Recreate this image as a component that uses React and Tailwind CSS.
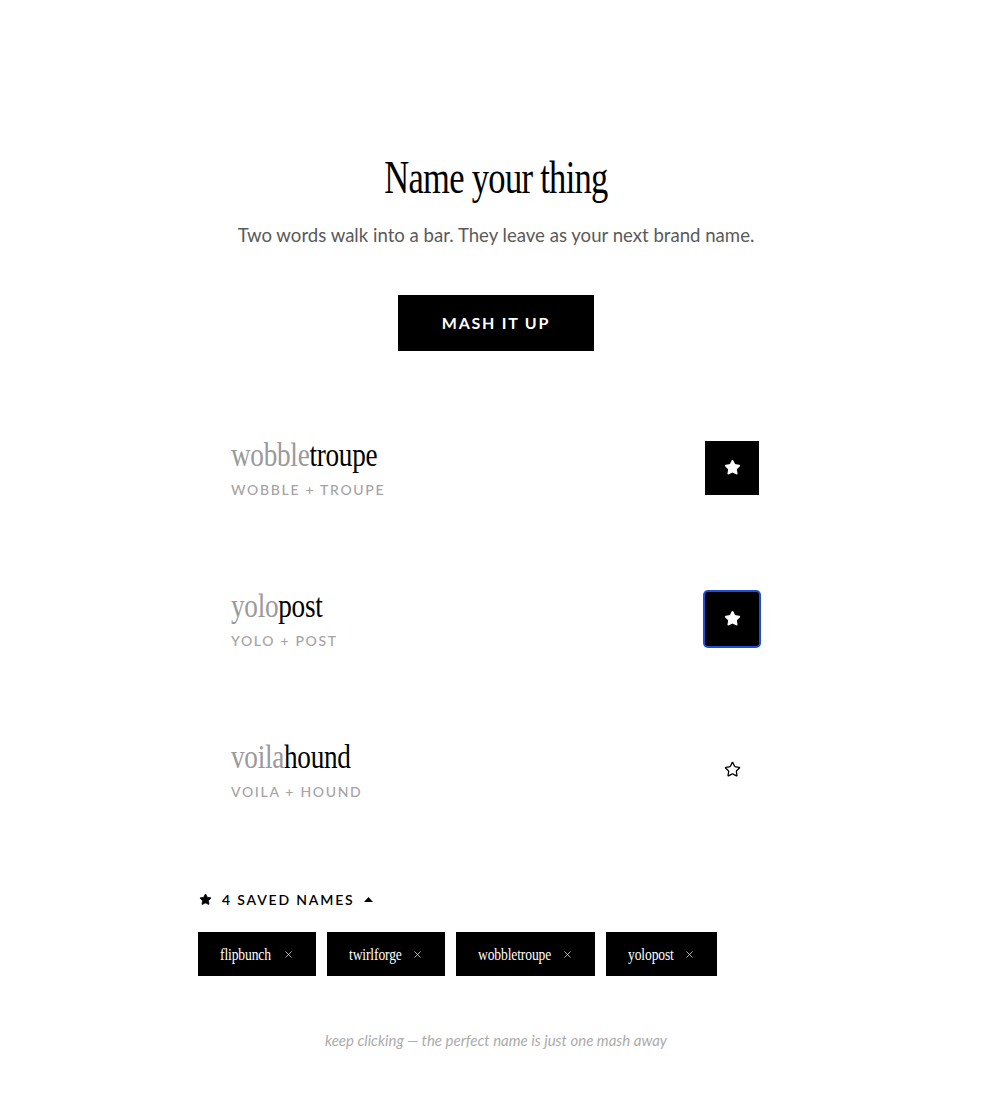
import React, { useState } from 'react';
import { Star, X } from 'lucide-react';

const serif = { fontFamily: '"Liberation Serif", "DejaVu Serif", serif' };

const results = [
  { a: 'wobble', b: 'troupe', saved: true },
  { a: 'yolo', b: 'post', saved: true, focused: true },
  { a: 'voila', b: 'hound', saved: false },
];

// chip widths follow the condensed name text
const savedNames = [
  { name: 'flipbunch', w: 'w-[118px]' },
  { name: 'twirlforge', w: 'w-[118px]' },
  { name: 'wobbletroupe', w: 'w-[139px]' },
  { name: 'yolopost', w: 'w-[111px]' },
];

const ResultRow = ({ item }) => (
  <div className="flex items-center justify-between pl-[33px] pr-[35px] h-[151px]">
    <div>
      <div
        className="inline-block origin-left scale-x-[0.8] text-[34px] leading-none tracking-[-0.01em] whitespace-nowrap"
        style={serif}
      >
        <span className="text-[#9a9a9a]">{item.a}</span>
        <span className="text-black">{item.b}</span>
      </div>
      <div className="mt-[11px] text-[14px] leading-none tracking-[0.12em] uppercase text-[#a3a3a3] font-medium">
        {item.a} + {item.b}
      </div>
    </div>
    {item.saved ? (
      <button
        className={`w-[54px] h-[54px] bg-black flex items-center justify-center ${
          item.focused ? 'ring-2 ring-[#1d4ed8] rounded-[3px]' : ''
        }`}
      >
        <Star className="w-[17px] h-[17px] text-white" fill="white" strokeWidth={1.5} />
      </button>
    ) : (
      <button className="w-[54px] h-[54px] flex items-center justify-center">
        <Star className="w-[17px] h-[17px] text-black" strokeWidth={1.8} />
      </button>
    )}
  </div>
);

export default function App() {
  const [open] = useState(true);

  return (
    <div className="min-h-[1100px] bg-white" style={{ fontFamily: 'Lato, "Noto Sans", sans-serif' }}>
      <div className="mx-auto w-[596px] pt-[153px]">
        {/* Header */}
        <div className="text-center">
          <h1
            className="inline-block scale-x-[0.75] text-[46px] leading-[1.1] tracking-[-0.02em] text-black whitespace-nowrap"
            style={serif}
          >
            Name your thing
          </h1>
          <p className="mt-[18px] text-[18.6px] text-[#5a5a5a]">
            Two words walk into a bar. They leave as your next brand name.
          </p>
          <button className="mt-[46px] w-[196px] h-[56px] bg-black text-white text-[16px] font-bold tracking-[0.11em] uppercase">
            Mash it up
          </button>
        </div>

        {/* Results */}
        <div className="mt-[41px]">
          {results.map((item) => (
            <ResultRow key={item.a} item={item} />
          ))}
        </div>

        {/* Saved */}
        <div className="mt-[44px]">
          <div className="flex items-center gap-[10px] text-[14px] font-semibold tracking-[0.13em] uppercase text-black">
            <Star className="w-[13px] h-[13px] ml-[1px]" fill="black" strokeWidth={1.5} />
            <span>4 Saved Names</span>
            <svg width="9" height="5" viewBox="0 0 9 5" className="-ml-[1px]">
              <path d={open ? 'M0 5 L4.5 0 L9 5 Z' : 'M0 0 L4.5 5 L9 0 Z'} fill="black" />
            </svg>
          </div>
          <div className="mt-[22px] flex gap-[11px]">
            {savedNames.map((n) => (
              <div
                key={n.name}
                className={`${n.w} h-[44px] bg-black text-white flex items-center pl-[22px] pr-[22px]`}
              >
                <span className="flex-1 min-w-0 overflow-visible">
                  <span
                    className="inline-block origin-left scale-x-[0.8] text-[17px] tracking-[-0.01em] whitespace-nowrap"
                    style={serif}
                  >
                    {n.name}
                  </span>
                </span>
                <X className="shrink-0 w-[11px] h-[11px] text-[#d4d4d4]" strokeWidth={1.8} />
              </div>
            ))}
          </div>
        </div>

        {/* Footer */}
        <p className="mt-[53px] text-center text-[15px] italic text-[#ababab]">
          keep clicking — the perfect name is just one mash away
        </p>
      </div>
    </div>
  );
}
